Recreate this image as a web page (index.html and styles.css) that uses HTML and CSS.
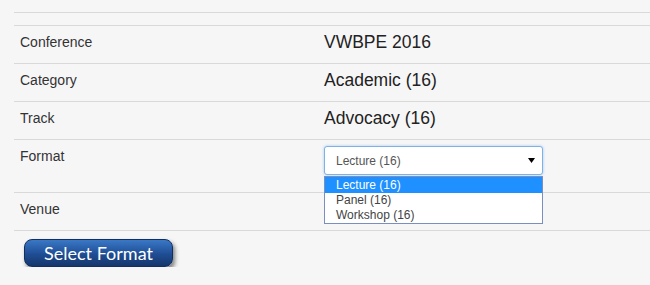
FILE: index.html
```html
<!DOCTYPE html>
<html>

<head>
  <title>Session Filter</title>
  <link rel="stylesheet" href="styles.css">
</head>

<body>
  <div class="details">
    <div class="spacer"></div>

    <div class="row">
      <div class="label">Conference</div>
      <div class="value">VWBPE 2016</div>
    </div>
    <div class="row">
      <div class="label">Category</div>
      <div class="value">Academic (16)</div>
    </div>
    <div class="row">
      <div class="label">Track</div>
      <div class="value">Advocacy (16)</div>
    </div>
    <div class="row row-tall">
      <div class="label">Format</div>
      <div class="value">
        <div class="select-wrap">
          <div class="select">
            <span>Lecture (16)</span>
            <svg class="arrow" width="7" height="5" viewBox="0 0 7 5">
              <polygon points="0,0 7,0 3.5,5" fill="#000" />
            </svg>
          </div>
          <ul class="options">
            <li class="active">Lecture (16)</li>
            <li>Panel (16)</li>
            <li>Workshop (16)</li>
          </ul>
        </div>
      </div>
    </div>
    <div class="row">
      <div class="label">Venue</div>
      <div class="value"></div>
    </div>
  </div>

  <button class="select-btn">Select Format</button>
</body>

</html>
```

FILE: styles.css
```css
body {
  margin: 0;
  background-color: #f7f6f7;
  font-family: "Liberation Sans", Arial, sans-serif;
  color: #333;
  overflow: hidden;
}

.details {
  margin: 12px 0 0 14px;
  border-top: 1px solid #d9d9d9;
}

.spacer {
  height: 12px;
}

.row {
  display: grid;
  grid-template-columns: 304px 1fr;
  box-sizing: border-box;
  height: 38px;
  border-top: 1px solid #d9d9d9;
}

.row:last-child {
  height: 39px;
  border-bottom: 1px solid #d9d9d9;
}

.row-tall {
  height: 53px;
}

.label {
  padding: 6px 0 0 6px;
  font-size: 14px;
  line-height: 20px;
  color: #333;
}

.value {
  padding: 6px 0 0 6px;
  font-size: 17.5px;
  line-height: 20px;
  color: #222;
}

.select-wrap {
  position: relative;
  width: 219px;
}

.select {
  box-sizing: border-box;
  height: 29px;
  display: flex;
  align-items: center;
  justify-content: space-between;
  padding: 0 7px 0 11px;
  background-color: #fff;
  border: 1px solid #7fb0e6;
  border-radius: 3px;
  box-shadow: 0 0 3px rgba(102, 175, 233, 0.6);
  font-size: 12px;
  color: #555;
}

.arrow {
  display: block;
  margin-top: -1px;
}

/* open dropdown list, drawn over the venue row */
.options {
  position: absolute;
  top: 30px;
  left: 0;
  right: 0;
  margin: 0;
  padding: 0;
  list-style: none;
  background-color: #fff;
  border: 1px solid #7a8fc0;
  font-size: 12px;
  line-height: 15px;
  color: #444;
  z-index: 2;
}

.options li {
  padding-left: 11px;
}

.options li.active {
  background-color: #1e90ff;
  color: #fff;
  line-height: 16px;
}

.select-btn {
  display: block;
  margin: 8px 0 0 24px;
  width: 149px;
  height: 28px;
  padding: 0;
  border: 1px solid #132f5e;
  border-radius: 8px;
  background: linear-gradient(#3a78c6, #1f4d94 55%, #15366b);
  color: #fff;
  font-family: Lato, "Open Sans", sans-serif;
  font-size: 18px;
  line-height: 26px;
  box-shadow: 2px 3px 4px rgba(50, 50, 50, 0.6);
  cursor: pointer;
}
```
